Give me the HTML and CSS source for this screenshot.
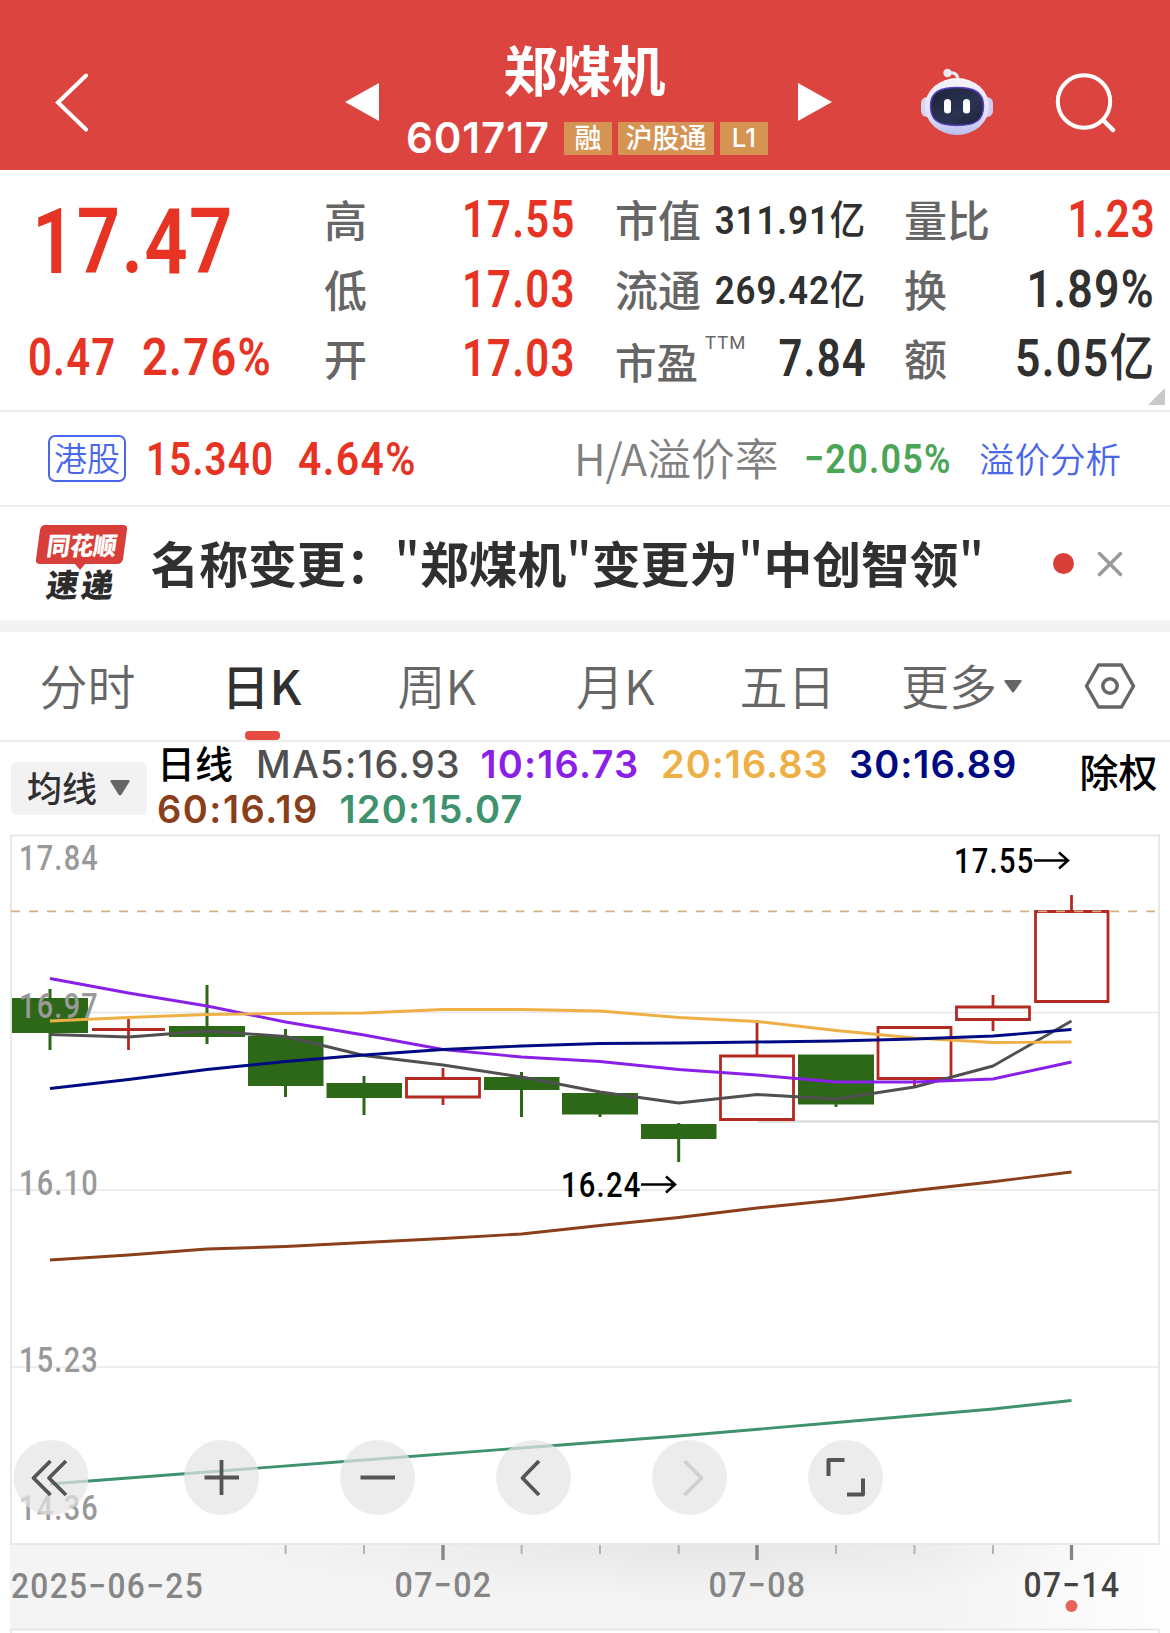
FILE: index.html
```html
<!DOCTYPE html>
<html lang="zh-CN">
<head>
<meta charset="utf-8">
<title>郑煤机 601717</title>
<link rel="stylesheet" href="styles.css">
</head>
<body>
<header class="topbar">
  <svg class="back" width="36" height="60" viewBox="0 0 36 60"><path d="M32 3.500L4 30.500L32 57.500" fill="none" stroke="#fff" stroke-width="4" stroke-linecap="round"/></svg>
  <svg class="prev" width="34" height="38" viewBox="0 0 34 38"><path d="M34 0V38L0 19Z" fill="#fff"/></svg>
  <div class="stock">
    <h1 class="stock-name">郑煤机</h1>
    <div class="stock-meta">
      <span class="code">601717</span>
      <span class="tag">融</span><span class="tag tag-wide">沪股通</span><span class="tag tag-latin">L1</span>
    </div>
  </div>
  <svg class="next" width="34" height="38" viewBox="0 0 34 38"><path d="M0 0V38L34 19Z" fill="#fff"/></svg>
  <svg class="robot" width="74" height="68" viewBox="0 0 74 68">
    <defs>
      <linearGradient id="shell" x1="0" y1="0" x2="0" y2="1"><stop offset="0" stop-color="#f6f5fb"/><stop offset="0.650" stop-color="#e2e0f5"/><stop offset="1" stop-color="#b9bdf0"/></linearGradient>
      <linearGradient id="visor" x1="0" y1="0" x2="1" y2="1"><stop offset="0" stop-color="#1c2338"/><stop offset="0.600" stop-color="#2a3352"/><stop offset="1" stop-color="#1e2038"/></linearGradient>
    </defs>
    <path d="M38 12C38 6 34 4 28 5" fill="none" stroke="#e9e6f5" stroke-width="3"/>
    <circle cx="27.500" cy="5" r="4.200" fill="#eeeaf4"/>
    <rect x="1" y="29" width="12" height="20" rx="6" fill="#d7d4f2"/>
    <rect x="61" y="29" width="12" height="20" rx="6" fill="#cfcdf3"/>
    <ellipse cx="37" cy="38.500" rx="32" ry="28.500" fill="url(#shell)"/>
    <path d="M37 19.500C54 19.500 63.500 24 63.500 38C63.500 52 56 57.500 37 57.500C18 57.500 10.500 52 10.500 38C10.500 24 20 19.500 37 19.500Z" fill="url(#visor)" stroke="#5a3fc4" stroke-width="1.500"/>
    <rect x="24" y="31" width="7" height="14.500" rx="3.500" fill="#fff"/>
    <rect x="43" y="31" width="7" height="14.500" rx="3.500" fill="#fff"/>
  </svg>
  <svg class="search" width="64" height="62" viewBox="0 0 64 62"><circle cx="30" cy="30.500" r="26.200" fill="none" stroke="#fff" stroke-width="4"/><path d="M50 50L59 59" stroke="#fff" stroke-width="4.500" stroke-linecap="round"/></svg>
</header>

<section class="quote">
  <div class="price-col">
    <div class="price"><span class="n">17.47</span></div>
    <div class="change"><span class="n delta">0.47</span><span class="n pct">2.76%</span></div>
  </div>
  <dl class="col col-a">
    <div class="row"><dt>高</dt><dd class="n up">17.55</dd></div>
    <div class="row"><dt>低</dt><dd class="n up">17.03</dd></div>
    <div class="row"><dt>开</dt><dd class="n up">17.03</dd></div>
  </dl>
  <dl class="col col-b">
    <div class="row"><dt>市值</dt><dd class="n small">311.91<i>亿</i></dd></div>
    <div class="row"><dt>流通</dt><dd class="n small">269.42<i>亿</i></dd></div>
    <div class="row"><dt class="pe">市盈<sup>TTM</sup></dt><dd class="n">7.84</dd></div>
  </dl>
  <dl class="col col-c">
    <div class="row"><dt>量比</dt><dd class="n up">1.23</dd></div>
    <div class="row"><dt>换</dt><dd class="n pct">1.89%</dd></div>
    <div class="row"><dt>额</dt><dd class="n pct">5.05<i>亿</i></dd></div>
  </dl>
  <span class="corner"></span>
</section>

<section class="hk">
  <span class="hk-badge">港股</span>
  <span class="n hk-price">15.340</span>
  <span class="n hk-pct">4.64%</span>
  <span class="ha-label">H/A溢价率</span>
  <span class="n ha-val">−20.05%</span>
  <a class="ha-link">溢价分析</a>
</section>

<section class="news">
  <div class="news-logo">
    <svg width="94" height="78" viewBox="0 0 94 78">
      <path d="M10 0H88Q93 0 92 5L88 34Q87 39 82 39H50L45 45L40 39H5Q0 39 1 34L5 5Q6 0 10 0Z" fill="#d83f3a"/>
      <g class="logo-text" transform="skewX(-8)">
        <text x="15" y="30.500" font-size="25" fill="#fff" textLength="70" lengthAdjust="spacingAndGlyphs">同花顺</text>
        <text x="20" y="72" font-size="32" fill="#2c2c2c">速</text>
        <text x="55" y="72" font-size="32" fill="#2c2c2c">递</text>
      </g>
    </svg>
  </div>
  <h2 class="news-title">名称变更：<b>"</b>郑煤机<b>"</b>变更为<b>"</b>中创智领<b>"</b></h2>
  <span class="news-dot"></span>
  <svg class="news-close" width="26" height="26" viewBox="0 0 26 26"><path d="M2.500 2.500L23.500 23.500M23.500 2.500L2.500 23.500" stroke="#999" stroke-width="3.500" stroke-linecap="round"/></svg>
</section>

<nav class="tabs">
  <a class="tab t1">分时</a>
  <a class="tab t2 active">日K</a>
  <a class="tab t3">周K</a>
  <a class="tab t4">月K</a>
  <a class="tab t5">五日</a>
  <a class="tab t6">更多<svg width="18" height="13" viewBox="0 0 18 13"><path d="M1.500 0H16.500Q18.500 0 17.300 1.800L10 12Q9 13 8 12L0.700 1.800Q-0.500 0 1.500 0Z" fill="#666"/></svg></a>
  <svg class="gear" width="54" height="48" viewBox="0 0 54 48"><path d="M15.500 3H38.500L50.500 24L38.500 45H15.500L3.500 24Z" fill="none" stroke="#666" stroke-width="3.500" stroke-linejoin="round"/><circle cx="27" cy="24" r="7.200" fill="none" stroke="#666" stroke-width="3.500"/></svg>
</nav>

<section class="ma">
  <button class="ma-btn"><span>均线</span><svg width="20" height="16" viewBox="0 0 20 16"><path d="M1.500 0H18.500Q20.500 0 19.300 2L11.500 14.500Q10 16.500 8.500 14.500L0.700 2Q-0.500 0 1.500 0Z" fill="#666"/></svg></button>
  <div class="ma-list">
    <div class="ma-line">
      <span class="m-day">日线</span><span class="m5">MA5:16.93</span><span class="m10">10:16.73</span><span class="m20">20:16.83</span><span class="m30">30:16.89</span>
    </div>
    <div class="ma-line">
      <span class="m60">60:16.19</span><span class="m120">120:15.07</span>
    </div>
  </div>
  <span class="adjust">除权</span>
</section>

<section class="chart">
<svg width="1170" height="805" viewBox="0 828 1170 805">
  <defs>
    <radialGradient id="shade"><stop offset="0" stop-color="#000" stop-opacity="0.060"/><stop offset="1" stop-color="#000" stop-opacity="0"/></radialGradient>
    <linearGradient id="fade" x1="0" x2="1" y1="0" y2="0"><stop offset="0" stop-color="#fff" stop-opacity="0"/><stop offset="1" stop-color="#fff" stop-opacity="0.900"/></linearGradient>
    <clipPath id="band"><rect x="10" y="1545" width="1160" height="84"/></clipPath>
  </defs>

  <g fill="none" stroke="#e8e8e8" stroke-width="2">
    <path d="M11 1012.500H1159M11 1190H1159M11 1367H1159" stroke-width="1.500"/>
    <path d="M758 1121.500H1159" stroke="#dcdcdc" stroke-width="2.500"/>
    <path d="M11 835.500H1159V1544H11Z"/>
  </g>

  <g fill="#2c6818">
    <path d="M12 998h76v35h-76zM48.500 989h3v61h-3z"/>
    <path d="M169 1026h76v11h-76zM205.500 985h3v59h-3z"/>
    <path d="M248 1036h75.500v50h-75.500zM284 1029h3v68h-3z"/>
    <path d="M326.500 1083h75.500v15h-75.500zM362.500 1076h3v39h-3z"/>
    <path d="M484 1077h75.500v13h-75.500zM520 1072h3v45h-3z"/>
    <path d="M562 1093h76v21.500h-76zM598.500 1100h3v17h-3z"/>
    <path d="M641 1124h75.500v15h-75.500zM677.200 1123h3v39h-3z"/>
    <path d="M798 1054.500h76v50h-76zM834.500 1100h3v7h-3z"/>
  </g>
  <g fill="none" stroke="#b22a22" stroke-width="2.800">
    <path d="M92 1029.500H165M128.500 1019V1050"/>
    <path d="M406.500 1078.500h73v18.500h-73zM443 1068V1078M443 1098V1105"/>
    <path d="M720.500 1056h73v63.500h-73zM757 1022V1056"/>
    <path d="M878 1027.500h73v51h-73zM914.500 1079V1088"/>
    <path d="M956.500 1007h73v12.500h-73zM993 995V1007M993 1020V1031"/>
    <path d="M1035.500 911.500h72.500v90h-72.500zM1071.500 895V911"/>
  </g>
  <path d="M11 911.300H1155" stroke="#d4b183" stroke-width="1.700" stroke-dasharray="9 9.020" fill="none"/>

  <g fill="none" stroke-width="2.900" stroke-linejoin="round">
    <path stroke="#505050" d="M50 1034.500L128.500 1037L207 1031L285.600 1036.500L364 1055.500L443 1065L521.600 1077L600 1092L678.700 1103L757 1094.500L836 1099L914.500 1087L993 1066L1071.500 1021"/>
    <path stroke="#8a1fe8" d="M50 978.500L128.500 993L207 1006L285.600 1022L364 1035L443 1049.500L521.600 1057L600 1061.500L678.700 1069.500L757 1075L836 1082L914.500 1082L993 1079L1071.500 1062"/>
    <path stroke="#eeb044" d="M50 1021L128.500 1017.500L207 1014.500L285.600 1013.500L364 1013L443 1009.500L521.600 1009.500L600 1011L678.700 1017.500L757 1021.500L836 1030.500L914.500 1038L993 1042.500L1071.500 1042"/>
    <path stroke="#000a82" d="M50 1088.500L128.500 1079.500L207 1069.500L285.600 1061.500L364 1055L443 1049.500L521.600 1046L600 1043.500L678.700 1043L757 1042L836 1041L914.500 1039L993 1036L1071.500 1029.500"/>
    <path stroke="#8a3e1a" d="M50 1260L128.500 1255L207 1249L285.600 1246.500L364 1242.500L443 1238.500L521.600 1234L600 1225.500L678.700 1217.500L757 1208L836 1200L914.500 1190.500L993 1181.700L1071.500 1172"/>
    <path stroke="#3f926e" d="M50 1484L207 1472L364 1460L521.600 1448L678.700 1436L836 1422.500L993 1409L1071.500 1400.500"/>
  </g>

  <g class="axis">
    <text x="19" y="870" textLength="80" lengthAdjust="spacingAndGlyphs">17.84</text>
    <text x="19" y="1018" textLength="80" lengthAdjust="spacingAndGlyphs">16.97</text>
    <text x="19" y="1195" textLength="80" lengthAdjust="spacingAndGlyphs">16.10</text>
    <text x="19" y="1372" textLength="80" lengthAdjust="spacingAndGlyphs">15.23</text>
    <text x="19" y="1519.500" textLength="80" lengthAdjust="spacingAndGlyphs">14.36</text>
  </g>
  <g class="peak">
    <text x="954" y="873" textLength="80.500" lengthAdjust="spacingAndGlyphs">17.55</text>
    <text x="561" y="1197" textLength="80.500" lengthAdjust="spacingAndGlyphs">16.24</text>
  </g>
  <g fill="none" stroke="#000" stroke-width="2.500">
    <path d="M1034 860.500H1068M1059 852.500L1068 860.500L1059 868.500"/>
    <path d="M641 1184.500H675M666 1176.500L675 1184.500L666 1192.500"/>
  </g>

  <g fill="#e4e4e4" fill-opacity="0.720">
    <circle cx="51" cy="1477.500" r="37.500"/><circle cx="221.500" cy="1477.500" r="37.500"/><circle cx="377.500" cy="1477.500" r="37.500"/>
    <circle cx="533.500" cy="1477.500" r="37.500"/><circle cx="689.500" cy="1477.500" r="37.500"/><circle cx="845.500" cy="1477.500" r="37.500"/>
  </g>
  <g fill="none" stroke="#555" stroke-width="3.800" stroke-linejoin="round">
    <path d="M50.500 1461L33.500 1478L50.500 1495M66 1461L49 1478L66 1495"/>
    <path d="M204.500 1477.500H239M221.500 1460V1495M360.500 1477.500H395"/>
    <path d="M539 1461L522.500 1478L539 1495"/>
    <path d="M684.500 1461L701.500 1478L684.500 1495" stroke="#d0d0d0"/>
    <path d="M844.500 1460H828.500V1476M863 1478.500V1494.500H847" stroke-width="4"/>
  </g>

  <g clip-path="url(#band)">
    <rect x="10" y="1545" width="1160" height="84" fill="#f4f4f4"/>
    <ellipse cx="700" cy="1540" rx="480" ry="60" fill="url(#shade)"/>
    <rect x="930" y="1545" width="240" height="84" fill="url(#fade)"/>
  </g>
  <path d="M10 1629.500H1159.500M11 1630V1633M1159 1630V1633" stroke="#e2e2e2" stroke-width="1.500"/>
  <path d="M285.600 1545V1554M364 1545V1554M521.600 1545V1554M600 1545V1554M678.700 1545V1554M836 1545V1554M914.500 1545V1554M993 1545V1554" stroke="#b4b4b4" stroke-width="2"/>
  <path d="M443 1545V1560M757 1545V1560M1071.500 1545V1560" stroke="#858585" stroke-width="3.300"/>
  <g class="dates">
    <text x="11" y="1597.500" textLength="193" lengthAdjust="spacingAndGlyphs">2025−06−25</text>
    <text x="394.500" y="1596.500" textLength="98" lengthAdjust="spacingAndGlyphs">07−02</text>
    <text x="708.500" y="1596.500" textLength="98" lengthAdjust="spacingAndGlyphs">07−08</text>
    <text x="1023.500" y="1596.500" textLength="97" lengthAdjust="spacingAndGlyphs" class="now">07−14</text>
  </g>
  <circle cx="1071.500" cy="1606" r="6" fill="#e8625c"/>
</svg>
</section>
</body>
</html>
```

FILE: styles.css
```css
* { box-sizing: border-box; }
body {
  margin: 0;
  width: 1170px;
  height: 1633px;
  overflow: hidden;
  background: #fff;
  color: #303030;
  font-family: "Noto Sans CJK SC", sans-serif;
}
h1, h2, dl, dd { margin: 0; }
svg { display: block; flex: none; }
i { font-style: normal; }

/* condensed numerals */
.n {
  font-family: Roboto, "Noto Sans CJK SC", sans-serif;
  font-weight: 600;
  font-size: 51px;
  letter-spacing: 1.5px;
  white-space: nowrap;
  transform: scaleX(0.82);
  transform-origin: left center;
}

.topbar {
  display: flex;
  align-items: center;
  height: 170px;
  padding-top: 33px;
  background: #dc443f;
}
.back { margin-left: 53.500px; }
.prev { margin-left: 255px; }
.stock { width: 419px; height: 137px; }
.stock-name {
  padding-right: 7px;
  color: #fff;
  font-size: 54px;
  font-weight: 700;
  line-height: 72px;
  text-align: center;
}
.stock-meta {
  display: flex;
  align-items: center;
  gap: 6px;
  height: 65px;
  padding: 2px 0 0 27.500px;
}
.code {
  width: 152px;
  color: #fff;
  font: 600 42px/48px Inter, sans-serif;
  letter-spacing: 0.9px;
  padding-bottom: 2px;
}
.tag {
  width: 48px;
  height: 33px;
  background: #d69454;
  color: #fff;
  font-size: 27px;
  font-weight: 500;
  line-height: 29px;
  text-align: center;
}
.tag-wide { width: 96px; }
.tag-latin { font: 500 26px/32px Inter, sans-serif; }
.robot { margin-left: 88px; }
.search { margin-left: 60.500px; }

.quote {
  position: relative;
  display: flex;
  height: 242px;
  padding-top: 14px;
  border-bottom: 2px solid #ececec;
}
.price-col { width: 324px; color: #e63323; }
.price { height: 137px; padding: 14px 0 0 32px; }
.price .n { display: inline-block; font-size: 90px; line-height: 90px; transform: scaleX(0.845); }
.change { display: flex; line-height: 73px; padding-left: 28px; }
.change .pct { transform: scaleX(0.885); }
.delta { width: 114px; }
.row { display: flex; justify-content: space-between; height: 69.500px; line-height: 69.500px; }
.col-a { width: 252px; }
.col-b { width: 251.500px; margin-left: 39px; }
.col-c { width: 251.500px; margin-left: 37.500px; }
dt { color: #666; font-size: 43px; font-weight: 500; line-height: 69px; white-space: nowrap; }
dd.n { line-height: 72px; transform-origin: right center; }
.n.pct { transform: scaleX(0.875); }
.change .n.pct { transform: scaleX(0.885); }
.up { color: #e63323; }
.n.small { margin-left: -30px; font-size: 39.500px; line-height: 73px; letter-spacing: 1px; transform: scaleX(0.885); }
.row i { font-size: 51px; font-weight: 500; }
.row .small i { font-size: 40px; }
.pe { padding-top: 4px; font-size: 41.500px; }
.pe sup {
  margin-left: 7px;
  font: 400 18.500px/18px Roboto, sans-serif;
  letter-spacing: 1px;
  vertical-align: 30px;
}
.corner {
  position: absolute;
  right: 5px;
  bottom: 5px;
  border-style: solid;
  border-width: 0 0 17px 17px;
  border-color: transparent transparent #c8c8c8;
}

.hk {
  display: flex;
  align-items: center;
  height: 95px;
  padding-left: 48px;
  border-bottom: 2px solid #ececec;
}
.hk-badge {
  width: 78px;
  height: 47px;
  border: 2px solid #4a67ea;
  border-radius: 7px;
  color: #4a67ea;
  font-size: 33px;
  font-weight: 350;
  line-height: 41px;
  text-align: center;
}
.n.hk-price { width: 152px; margin-left: 20px; padding-top: 1px; font-size: 46px; color: #e63323; transform: scaleX(0.835); }
.n.hk-pct { width: 276px; padding-top: 1px; font-size: 46px; color: #e63323; transform: scaleX(0.89); }
.ha-label { width: 230px; padding-bottom: 3px; color: #808080; font-size: 43.800px; font-weight: 350; line-height: 60px; white-space: nowrap; }
.n.ha-val { width: 175px; color: #4aa556; font-size: 41.500px; font-weight: 600; transform: scaleX(0.865); }
.ha-link { padding-bottom: 3px; color: #4a67ea; font-size: 35.500px; font-weight: 350; white-space: nowrap; }

.news {
  display: flex;
  align-items: center;
  height: 125px;
  border-bottom: 12px solid #f3f3f3;
}
.news-logo { margin-left: 35px; }
.news-logo svg { overflow: visible; }
.logo-text { font-family: "Noto Sans CJK SC", sans-serif; font-weight: 900; }
.news-title {
  width: 902px;
  margin-left: 21.500px;
  padding-bottom: 4px;
  font-size: 48.800px;
  font-weight: 700;
  line-height: 70px;
  white-space: nowrap;
}
.news-title b { font-weight: 500; }
.news-dot { width: 21px; height: 21px; margin-right: 23px; border-radius: 50%; background: #d83f38; }

.tabs {
  display: flex;
  align-items: center;
  height: 110px;
  border-bottom: 2px solid #ececec;
}
.tab {
  position: relative;
  color: #666;
  font-size: 48px;
  font-weight: 350;
  line-height: 101px;
  padding-bottom: 4px;
  white-space: nowrap;
}
.active { color: #303030; font-weight: 500; }
.active::after {
  content: "";
  position: absolute;
  left: 23px;
  bottom: -1px;
  width: 35px;
  height: 9px;
  border-radius: 4px;
  background: #e64b42;
}
.t1 { width: 182px; margin-left: 39.500px; }
.t2 { width: 176px; }
.t3 { width: 178.500px; }
.t4 { width: 163.500px; }
.t5 { width: 161.500px; }
.t6 { display: flex; align-items: center; gap: 7px; width: 181.500px; }
.t6 svg { margin-top: 4px; }

.ma { display: flex; height: 86px; }
.ma-btn {
  display: flex;
  align-items: center;
  gap: 13px;
  width: 136px;
  height: 53px;
  margin: 20px 0 0 11px;
  padding: 0 0 0 16px;
  border: 0;
  border-radius: 6px;
  background: #f2f2f2;
  color: #303030;
  font: 500 35px/48px "Noto Sans CJK SC", sans-serif;
}
.ma-btn span { padding-bottom: 4px; }
.ma-btn svg { margin-bottom: 2px; }
.ma-list { width: 932.500px; padding-left: 10px; }
.ma-line { display: flex; font: 600 38px/45px Inter, "Noto Sans CJK SC", sans-serif; letter-spacing: 1.2px; white-space: nowrap; }
.m-day { width: 99px; color: #000; letter-spacing: 0; font-weight: 500; }
.m5 { width: 224.500px; color: #505050; font-weight: 500; }
.m10 { width: 180.500px; color: #8a1fe8; }
.m20 { width: 188px; color: #eeb044; letter-spacing: 1px; }
.m30 { color: #000a82; letter-spacing: 1px; }
.m60 { width: 182.500px; color: #8a3e1a; letter-spacing: 1.500px; }
.m120 { color: #3f926e; }
.adjust { color: #000; font-size: 39px; font-weight: 500; line-height: 56px; white-space: nowrap; }

.axis, .peak, .dates { font: 500 35px Roboto, sans-serif; letter-spacing: 1.5px; }
.axis { fill: #999; }
.peak { fill: #000; }
.dates { fill: #858585; }
.dates .now { fill: #444; }
```
